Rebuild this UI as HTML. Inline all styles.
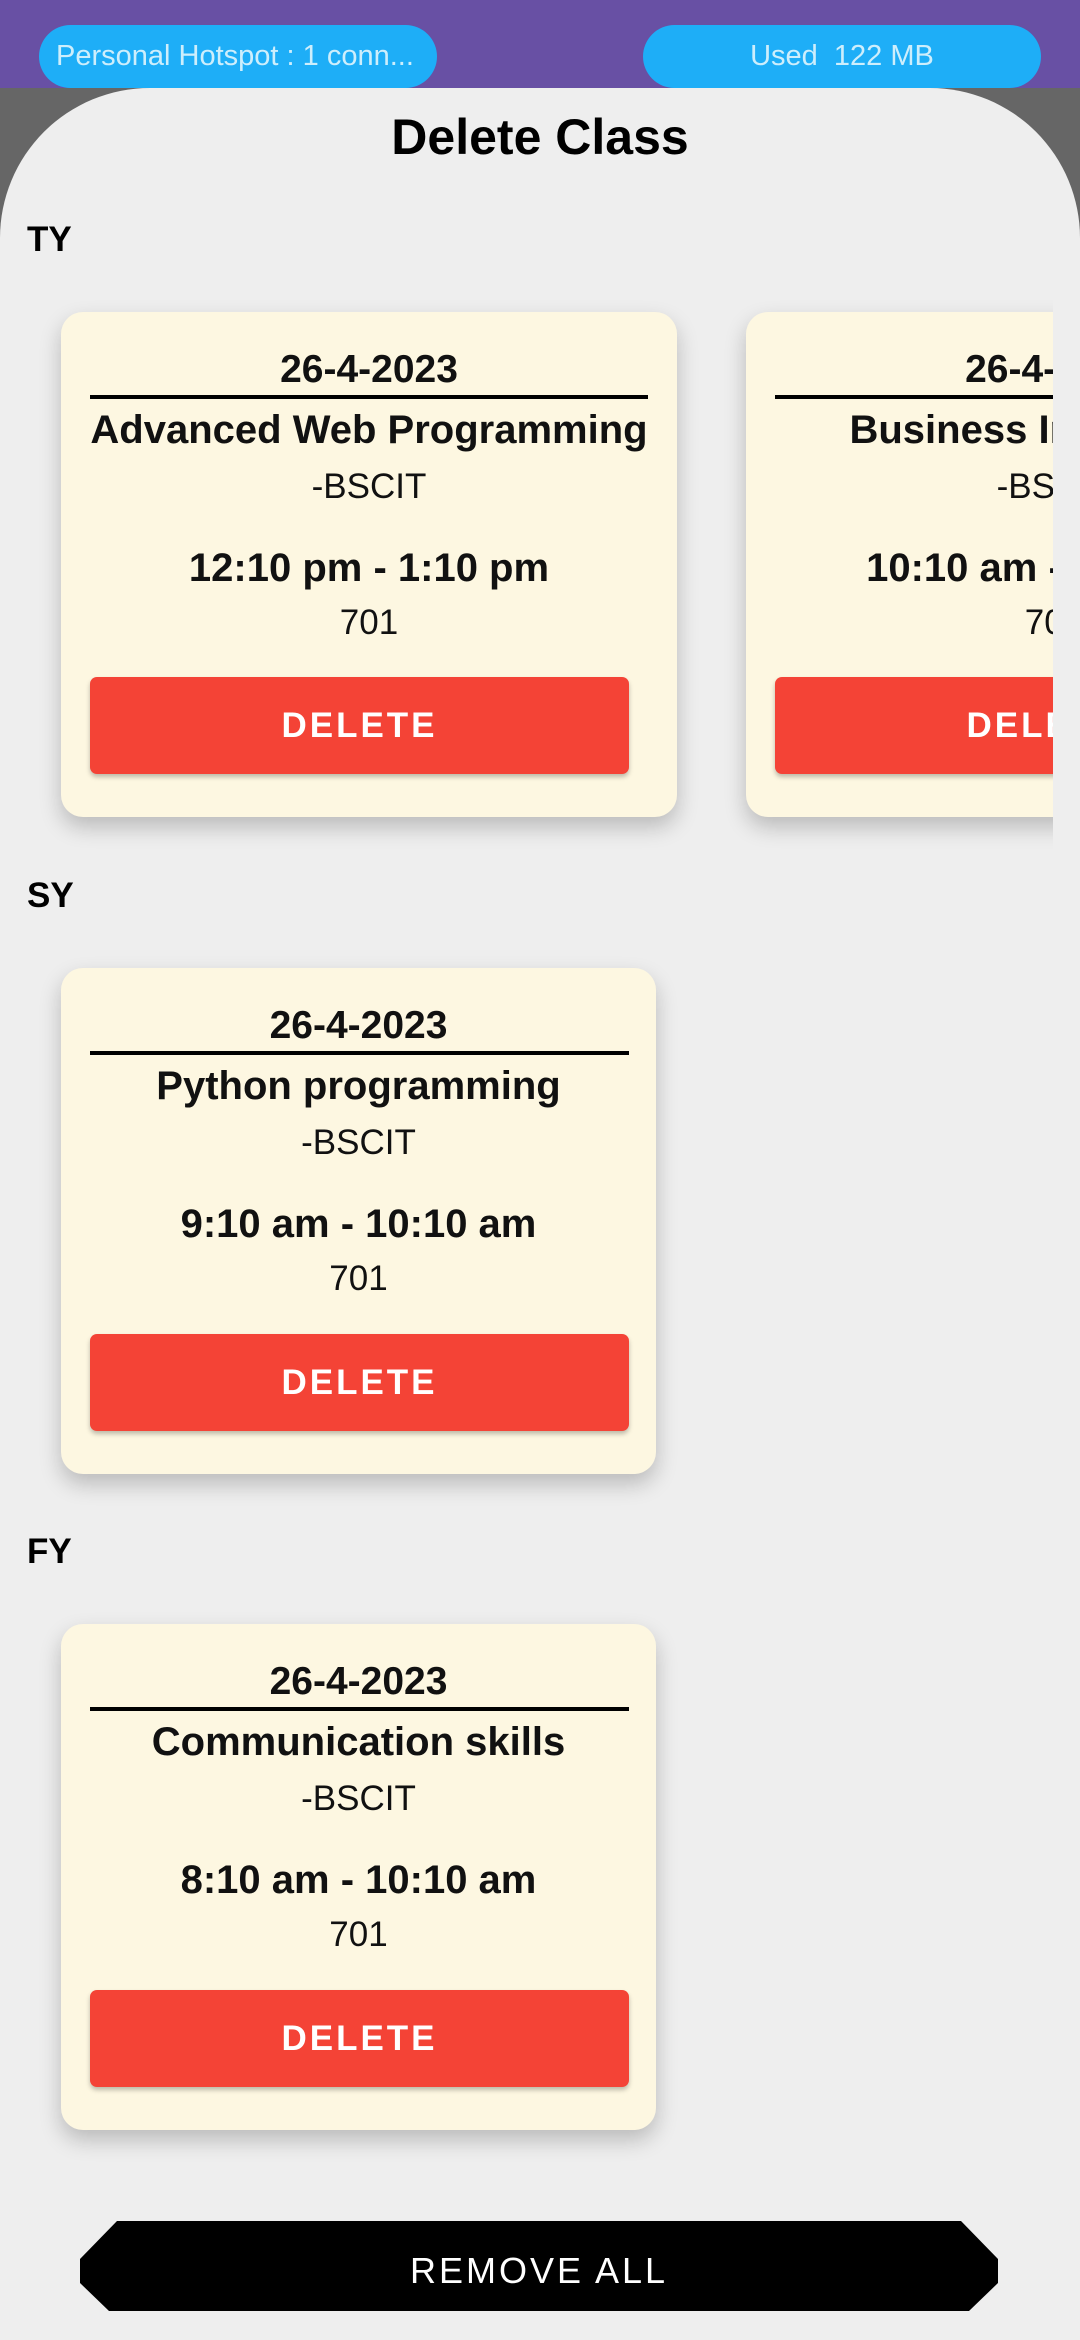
<!DOCTYPE html>
<html><head><meta charset="utf-8"><style>
*{margin:0;padding:0;box-sizing:border-box}
body{width:1080px;height:2340px;background:#666;font-family:"Liberation Sans",Arial,sans-serif;position:relative;overflow:hidden}
.top{position:absolute;left:0;top:0;width:1080px;height:88px;background:#6850a4}
.pill{position:absolute;top:25px;height:63px;width:398px;border-radius:32px;background:#1eaef7;color:#cdeefc;font-size:29px;line-height:63px}
.sheet{position:absolute;left:0;top:88px;width:1080px;height:2252px;background:#eeeeee;border-radius:150px 150px 0 0}
h1{position:absolute;top:108px;width:1080px;text-align:center;font-size:50px;font-weight:bold;color:#000}
.sec{position:absolute;left:27px;font-size:35px;font-weight:bold;color:#000}
.card{position:absolute;background:#fdf7e1;border-radius:22px;box-shadow:0 10px 22px rgba(0,0,0,.22);overflow:hidden}
.card div{position:absolute;left:0;right:0;text-align:center;color:#111;white-space:nowrap}
.d{font-size:39px;font-weight:bold}
.t{font-size:40px;font-weight:bold}
.b{font-size:35px}
.ln{height:4px;background:#000}
.btn{position:absolute;background:#f44336;border-radius:7px;color:#fff!important;font-size:35px;font-weight:bold;letter-spacing:3px;line-height:97px;box-shadow:0 3px 5px rgba(0,0,0,.25)}
.rm{position:absolute;left:80px;top:2221px;width:918px;height:90px;background:#000;clip-path:polygon(37px 0,881px 0,918px 38px,918px 62px,889px 90px,29px 90px,0 62px,0 38px);color:#fff;font-size:36px;letter-spacing:3px;text-align:center;line-height:100px}
</style></head><body>
<div class="top"></div>
<div class="pill" style="left:39px;padding-left:17px">Personal Hotspot : 1 conn...</div>
<div class="pill" style="left:643px;text-align:center">Used&nbsp; 122 MB</div>
<div class="sheet"></div>
<h1>Delete Class</h1>

<div class="sec" style="top:220px">TY</div>
<div class="card" style="left:61px;top:312px;width:616px;height:505px">
 <div class="d" style="top:36px">26-4-2023</div>
 <div class="ln" style="top:83px;left:29px;right:29px"></div>
 <div class="t" style="top:96px">Advanced Web Programming</div>
 <div class="b" style="top:155px">-BSCIT</div>
 <div class="t" style="top:234px">12:10 pm - 1:10 pm</div>
 <div class="b" style="top:291px">701</div>
 <div class="btn" style="top:365px;left:29px;right:48px">DELETE</div>
</div>
<div style="position:absolute;left:716px;top:291px;width:337px;height:571px;overflow:hidden">
<div class="card" style="left:30px;top:21px;width:616px;height:505px">
 <div class="d" style="top:36px">26-4-2023</div>
 <div class="ln" style="top:83px;left:29px;right:29px"></div>
 <div class="t" style="top:96px">Business Intelligence</div>
 <div class="b" style="top:155px">-BSCIT</div>
 <div class="t" style="top:234px">10:10 am - 11:10 am</div>
 <div class="b" style="top:291px">701</div>
 <div class="btn" style="top:365px;left:29px;right:48px">DELETE</div>
</div></div>

<div class="sec" style="top:876px">SY</div>
<div class="card" style="left:61px;top:968px;width:595px;height:506px">
 <div class="d" style="top:36px">26-4-2023</div>
 <div class="ln" style="top:83px;left:29px;right:27px"></div>
 <div class="t" style="top:96px">Python programming</div>
 <div class="b" style="top:155px">-BSCIT</div>
 <div class="t" style="top:234px">9:10 am - 10:10 am</div>
 <div class="b" style="top:291px">701</div>
 <div class="btn" style="top:366px;left:29px;right:27px">DELETE</div>
</div>

<div class="sec" style="top:1532px">FY</div>
<div class="card" style="left:61px;top:1624px;width:595px;height:506px">
 <div class="d" style="top:36px">26-4-2023</div>
 <div class="ln" style="top:83px;left:29px;right:27px"></div>
 <div class="t" style="top:96px">Communication skills</div>
 <div class="b" style="top:155px">-BSCIT</div>
 <div class="t" style="top:234px">8:10 am - 10:10 am</div>
 <div class="b" style="top:291px">701</div>
 <div class="btn" style="top:366px;left:29px;right:27px">DELETE</div>
</div>

<div class="rm">REMOVE ALL</div>
</body></html>
